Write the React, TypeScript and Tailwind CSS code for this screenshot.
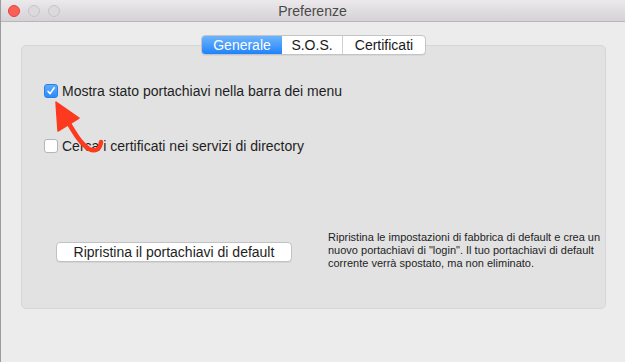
import React from "react";

export default function App() {
  const font = { fontFamily: '"Liberation Sans", Arial, sans-serif' };
  return (
    <div className="w-[625px] h-[362px] flex bg-[#7a7a7a] overflow-hidden" style={font}>
      <div className="w-px h-full bg-[#9c9c9c]" />
      <div className="flex-1 h-full flex flex-col bg-[#ececec] relative">
        {/* Title bar */}
        <div className="h-[22px] shrink-0 relative flex items-center justify-center bg-gradient-to-b from-[#ebe9eb] to-[#d4d2d4] border-b border-[#b8b6b8]">
          <div className="absolute left-[7px] top-[5px] flex gap-[8px]">
            <div className="w-[12px] h-[12px] rounded-full bg-[#fc5f57] border border-[#e0443e]" />
            <div className="w-[12px] h-[12px] rounded-full bg-[#dcdadc] border border-[#c6c4c6]" />
            <div className="w-[12px] h-[12px] rounded-full bg-[#dcdadc] border border-[#c6c4c6]" />
          </div>
          <span className="text-[14px] text-[#4a4a4a] leading-none pt-[1px] -ml-[1px]">Preferenze</span>
        </div>

        {/* Tabs */}
        <div className="mt-[13px] flex justify-center relative z-10 pl-[1px]">
          <div className="flex h-[20px] rounded-[4px] border border-[#c4c4c4] bg-white overflow-hidden text-[14px] shadow-[0_1px_0_rgba(0,0,0,0.05)]">
            <div className="w-[80px] flex items-center justify-center text-white bg-gradient-to-b from-[#6db4fb] to-[#1b83fb]">
              Generale
            </div>
            <div className="w-[61px] flex items-center justify-center text-[#1a1a1a] border-r border-[#d0d0d0]">
              S.O.S.
            </div>
            <div className="w-[82px] flex items-center justify-center text-[#1a1a1a]">
              Certificati
            </div>
          </div>
        </div>

        {/* Panel */}
        <div className="-mt-[10px] ml-[20px] w-[585px] h-[264px] rounded-[5px] bg-[#e2e2e2] border border-[#d6d6d6] relative flex flex-col">
          <div className="mt-[38px] ml-[22px] flex items-center gap-[4px] h-[14px]">
            <div className="w-[14px] h-[14px] shrink-0 rounded-[3px] bg-gradient-to-b from-[#5cadfc] to-[#2b8bf9] border border-[#2a7fe6] flex items-center justify-center">
              <svg width="10" height="10" viewBox="0 0 10 10">
                <path d="M2 5.3 L4.1 7.6 L8.2 1.8" fill="none" stroke="white" strokeWidth="1.6" strokeLinecap="round" strokeLinejoin="round" />
              </svg>
            </div>
            <span className="text-[14px] text-[#1e1e1e]">Mostra stato portachiavi nella barra dei menu</span>
          </div>
          <div className="mt-[41px] ml-[22px] flex items-center gap-[4px] h-[14px]">
            <div className="w-[14px] h-[14px] shrink-0 rounded-[3px] bg-white border border-[#b5b5b5]" />
            <span className="text-[14px] text-[#1e1e1e]">Cerca i certificati nei servizi di directory</span>
          </div>

          <div className="mt-[81px] ml-[34px] flex items-center gap-[36px]">
            <div className="w-[236px] h-[20px] rounded-[4px] bg-white border border-[#c2c2c2] shadow-[0_1px_0_rgba(0,0,0,0.06)] flex items-center justify-center text-[14px] text-[#1e1e1e]">
              Ripristina il portachiavi di default
            </div>
            <div className="text-[11px] leading-[13px] text-[#1e1e1e] -mt-[3px]">
              Ripristina le impostazioni di fabbrica di default e crea un
              <br />
              nuovo portachiavi di "login". Il tuo portachiavi di default
              <br />
              corrente verrà spostato, ma non eliminato.
            </div>
          </div>
        </div>

        {/* Red arrow annotation */}
        <svg className="absolute left-0 top-0 pointer-events-none" width="625" height="362" viewBox="0 0 625 362">
          <path d="M55 102 L57 131 L78 118 Z" fill="#fc3a1f" stroke="#fc3a1f" strokeWidth="1.5" strokeLinejoin="round" />
          <path d="M67 122 C 74 134, 80 144, 88 149 C 94 152, 99 150, 100 142" fill="none" stroke="#fc3a1f" strokeWidth="4.5" strokeLinecap="round" />
        </svg>
      </div>
    </div>
  );
}
